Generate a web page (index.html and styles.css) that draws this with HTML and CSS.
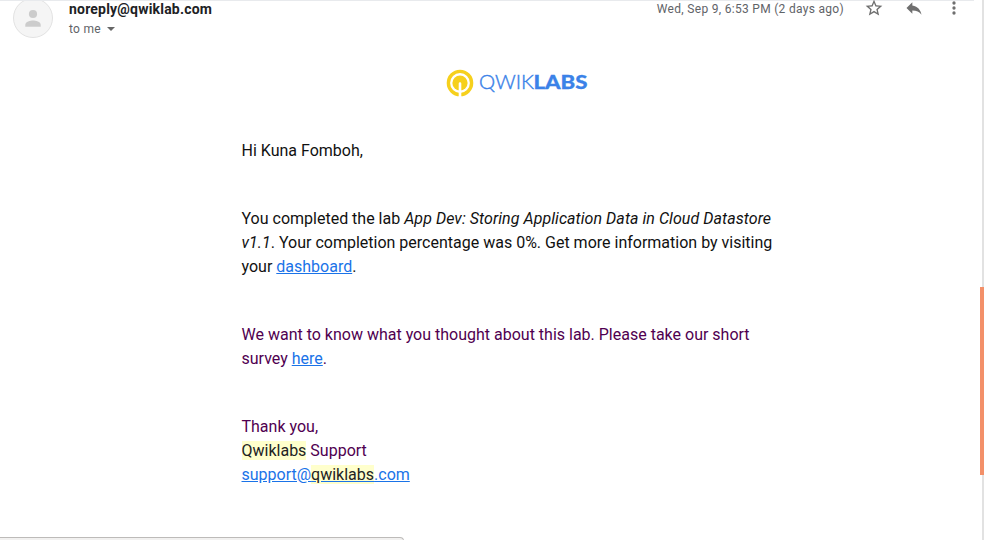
FILE: index.html
```html
<!DOCTYPE html>
<html lang="en">
<head>
<meta charset="utf-8">
<title>Qwiklabs mail</title>
<link rel="stylesheet" href="styles.css">
</head>
<body>
<div class="window">
  <main class="message">
    <header class="head">
      <svg class="avatar" viewBox="0 0 40 40"><circle cx="20" cy="20" r="19.5" fill="#f5f5f5" stroke="#e2e2e2"/><circle cx="20" cy="16" r="4.1" fill="#ccc"/><path d="M12.3 28.7v-2c0-2.900 5.100-4.200 7.700-4.200s7.700 1.300 7.700 4.200v2z" fill="#ccc"/></svg>
      <div class="who">
        <div class="sender">noreply@qwiklab.com</div>
        <div class="to">to me <span class="caret"></span></div>
      </div>
      <div class="date">Wed, Sep 9, 6:53 PM (2 days ago)</div>
      <svg class="icon star" viewBox="0 0 24 24"><path d="M22 9.240l-7.190-.62L12 2 9.190 8.630 2 9.240l5.460 4.730L5.820 21 12 17.270 18.180 21l-1.630-7.030L22 9.240zM12 15.400l-3.760 2.270 1-4.280-3.320-2.880 4.380-.38L12 6.100l1.710 4.040 4.380.38-3.320 2.880 1 4.280L12 15.400z"/></svg>
      <svg class="icon reply" viewBox="0 0 24 24"><path d="M10 9V5l-7 7 7 7v-4.100c5 0 8.500 1.600 11 5.100-1-5-4-10-11-11z"/></svg>
      <svg class="icon more" viewBox="0 0 24 24"><circle cx="12" cy="6" r="2"/><circle cx="12" cy="12" r="2"/><circle cx="12" cy="18" r="2"/></svg>
    </header>
    <article class="body">
      <svg class="logo" viewBox="0 0 142 28">
        <circle cx="14" cy="14" r="11.600" fill="none" stroke="#f6d01c" stroke-width="3.400"/>
        <circle cx="14" cy="14" r="7.600" fill="#f6d01c"/>
        <path d="M12.700 14.500a1.300 1.300 0 0 1 2.600 0V28h-2.600z" fill="#fff"/>
        <text class="thin" x="33" y="20" textLength="55" lengthAdjust="spacingAndGlyphs">QWIK</text>
        <text class="bold" x="87.500" y="20" textLength="54" lengthAdjust="spacingAndGlyphs">LABS</text>
      </svg>
      <p>Hi Kuna Fomboh,</p>
      <p>You completed the lab <i>App Dev: Storing Application Data in Cloud Datastore v1.1</i>. Your completion percentage was 0%. Get more information by visiting your <a>dashboard</a>.</p>
      <p class="quoted">We want to know what you thought about this lab. Please take our short survey <a>here</a>.</p>
      <p class="quoted">Thank you,<br><mark>Qwiklabs</mark> Support<br><a>support@<mark>qwiklabs</mark>.com</a></p>
    </article>
  </main>
  <div class="track"><div class="thumb"></div></div>
  <div class="status"></div>
</div>
</body>
</html>
```
FILE: styles.css
```css
* { box-sizing: border-box; }
body { margin: 0; background: #fff; font-family: Roboto, "Liberation Sans", sans-serif; color: #202124; }
.window { position: relative; display: flex; width: 984px; height: 540px; overflow: hidden; }
.message { width: 974px; border-top: 1px solid #e8eaed; }
.head { display: flex; height: 40px; padding-left: 13px; margin-top: -3px; }
.avatar { width: 40px; height: 40px; clip-path: inset(3px 0 0 0); }
.who { margin-left: 16px; flex: 1; }
.sender { font-size: 14px; line-height: 20px; font-weight: 700; margin-top: 1px; letter-spacing: .2px; }
.to { display: flex; align-items: center; font-size: 12px; line-height: 18px; margin-top: 1px; letter-spacing: .3px; color: #5f6368; }
.caret { margin-left: 6px; border: 4px solid transparent; border-top-color: #666; border-bottom: 0; }
.date { font-size: 12px; line-height: 20px; margin-top: 1px; letter-spacing: .3px; color: #5f6368; }
.icon { width: 20px; height: 20px; fill: #6f6f6f; flex: none; }
.star { margin-left: 20px; }
.reply { margin-left: 20px; }
.more { margin: 0 10px 0 20px; }
.body { width: 540px; margin: 31px 0 0 241.500px; font-size: 16px; line-height: 24px; color: #111; }
.logo { display: block; width: 142px; height: 28px; margin: 0 0 42px 204.500px; overflow: visible; }
.logo text { font-family: Lato, sans-serif; font-size: 19.500px; fill: #3b82e8; }
.logo .thin { font-weight: 300; stroke: #3b82e8; stroke-width: .4px; }
.logo .bold { font-weight: 900; stroke: #3b82e8; stroke-width: .3px; }
p { margin: 0 0 44px; }
i { letter-spacing: .06px; }
.quoted { color: #500050; }
a { color: #1a73e8; text-decoration: underline; }
mark { background: #ffc; color: #222; }
.track { width: 4px; margin-left: auto; padding: 287px 0 0; background: linear-gradient(90deg, transparent 2px, #e2e2e2 2px); }
.thumb { height: 188px; background: #f39069; }
.status { position: absolute; left: -1px; bottom: -1px; width: 405px; height: 4px; background: #f2f1f0; border: 1px solid #bdbbb9; border-radius: 0 4px 0 0; }
```
